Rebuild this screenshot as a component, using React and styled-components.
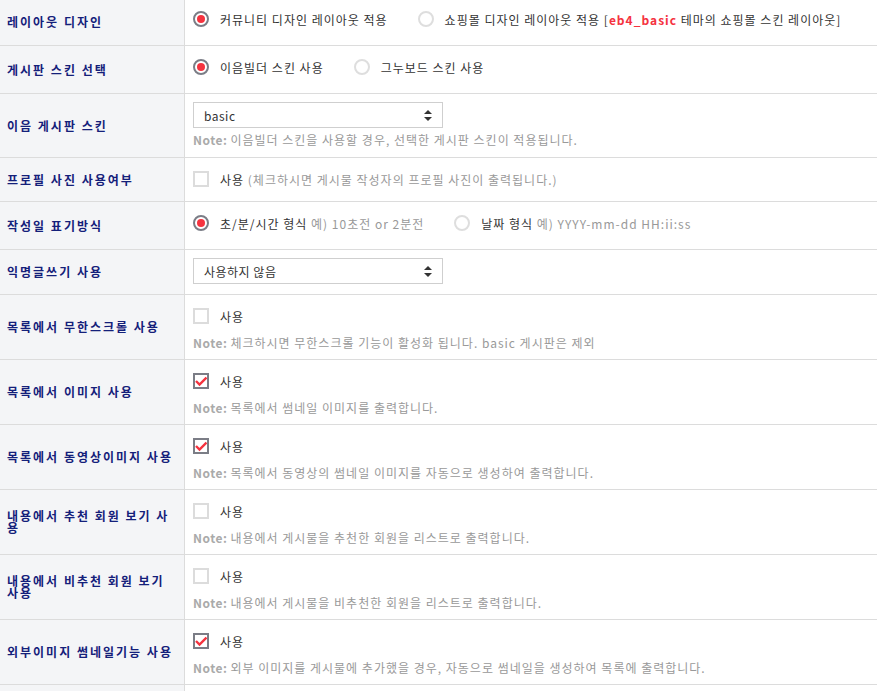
import React from 'react';
import styled, { createGlobalStyle } from 'styled-components';

const Global = createGlobalStyle`
  html, body { margin: 0; padding: 0; overflow: hidden; background: #fff; }
  body { font-family: "Noto Sans CJK KR", "Noto Sans", sans-serif; }
`;

const Table = styled.div`
  margin-top: -2px;
  width: 100%;
`;

const Row = styled.div`
  display: grid;
  grid-template-columns: 185px 1fr;
  border-bottom: 1px solid #dcdcdc;
`;

const Label = styled.div`
  background: #f4f5f7;
  border-right: 1px solid #dcdcdc;
  padding: 0 10px 0 7px;
  display: flex;
  align-items: center;
  font-size: 12px;
  font-weight: 700;
  letter-spacing: 2px;
  line-height: 12px;
  color: #14207a;
`;

const Cell = styled.div`
  padding: ${p => p.$pad || '10px 8px 15px'};
  display: flex;
  flex-direction: column;
  align-items: flex-start;
  min-width: 0;
`;

const Line = styled.div`
  display: flex;
  align-items: center;
  height: 22px;
`;

const Option = styled.label`
  display: inline-flex;
  align-items: center;
  gap: 11px;
  margin-right: ${p => (p.$last ? 0 : '30px')};
  font-size: 12px;
  letter-spacing: 1px;
  color: #333;
  white-space: nowrap;
`;

const RadioDot = styled.span`
  width: 16px;
  height: 16px;
  box-sizing: border-box;
  border-radius: 50%;
  border: 2px solid ${p => (p.$on ? '#7b7d86' : '#dedede')};
  display: inline-flex;
  align-items: center;
  justify-content: center;
  flex: none;
  &::after {
    content: '';
    width: 8px;
    height: 8px;
    border-radius: 50%;
    background: ${p => (p.$on ? '#f5333f' : 'transparent')};
  }
`;

const Box = styled.span`
  width: 16px;
  height: 16px;
  box-sizing: border-box;
  border: 2px solid ${p => (p.$on ? '#7b7d86' : '#dcdcdc')};
  display: inline-flex;
  align-items: center;
  justify-content: center;
  flex: none;
`;

const Hint = styled.span`
  color: #999;
`;

const Accent = styled.b`
  color: #f5333f;
  font-weight: 700;
`;

const Note = styled.div`
  margin-top: ${p => p.$mt || '8px'};
  font-size: 12px;
  letter-spacing: 1px;
  line-height: 16px;
  color: #999;
  white-space: nowrap;
`;

const NoteTag = styled.b`
  color: #aaa;
  font-weight: 700;
  letter-spacing: 0.5px;
  margin-right: 3px;
`;

const SelectBox = styled.div`
  width: 250px;
  height: 26px;
  box-sizing: border-box;
  border: 1px solid #cfcfcf;
  background: #fff;
  display: flex;
  align-items: center;
  justify-content: space-between;
  padding: 0 10px 0 10px;
  font-size: 12px;
  letter-spacing: 0.5px;
  color: #333;
`;

const Radio = ({ on, children, last }) => (
  <Option $last={last}>
    <RadioDot $on={on} />
    <span>{children}</span>
  </Option>
);

const Check = ({ on, children }) => (
  <Option $last>
    <Box $on={on}>
      {on && (
        <svg width="12" height="12" viewBox="0 0 12 12">
          <polyline points="1,6 4.5,9.5 11.5,2.5" fill="none" stroke="#f5333f" strokeWidth="2.4" />
        </svg>
      )}
    </Box>
    <span>{children}</span>
  </Option>
);

const Select = ({ value }) => (
  <SelectBox>
    <span>{value}</span>
    <svg width="8" height="11" viewBox="0 0 8 11">
      <polygon points="4,0 8,4 0,4" fill="#333" />
      <polygon points="0,7 8,7 4,11" fill="#333" />
    </svg>
  </SelectBox>
);

const CheckWithNote = ({ label, on, note }) => (
  <Row>
    <Label>{label}</Label>
    <Cell $pad="10px 8px 8px">
      <Line>
        <Check on={on}>사용</Check>
      </Line>
      <Note>
        <NoteTag>Note:</NoteTag>
        {note}
      </Note>
    </Cell>
  </Row>
);

export default function App() {
  return (
    <>
      <Global />
      <Table>
        <Row>
          <Label>레이아웃 디자인</Label>
          <Cell>
            <Line>
              <Radio on>커뮤니티 디자인 레이아웃 적용</Radio>
              <Radio last>
                쇼핑몰 디자인 레이아웃 적용 [<Accent>eb4_basic</Accent> 테마의 쇼핑몰 스킨 레이아웃]
              </Radio>
            </Line>
          </Cell>
        </Row>
        <Row>
          <Label>게시판 스킨 선택</Label>
          <Cell>
            <Line>
              <Radio on>이음빌더 스킨 사용</Radio>
              <Radio last>그누보드 스킨 사용</Radio>
            </Line>
          </Cell>
        </Row>
        <Row>
          <Label>이음 게시판 스킨</Label>
          <Cell $pad="8px 8px 9px">
            <Select value="basic" />
            <Note $mt="4px">
              <NoteTag>Note:</NoteTag>
              이음빌더 스킨을 사용할 경우, 선택한 게시판 스킨이 적용됩니다.
            </Note>
          </Cell>
        </Row>
        <Row>
          <Label>프로필 사진 사용여부</Label>
          <Cell $pad="10px 8px 11px">
            <Line>
              <Check>
                사용 <Hint>(체크하시면 게시물 작성자의 프로필 사진이 출력됩니다.)</Hint>
              </Check>
            </Line>
          </Cell>
        </Row>
        <Row>
          <Label>작성일 표기방식</Label>
          <Cell>
            <Line>
              <Radio on>
                초/분/시간 형식 <Hint>예) 10초전 or 2분전</Hint>
              </Radio>
              <Radio last>
                날짜 형식 <Hint>예) YYYY-mm-dd HH:ii:ss</Hint>
              </Radio>
            </Line>
          </Cell>
        </Row>
        <Row>
          <Label>익명글쓰기 사용</Label>
          <Cell $pad="8px 8px 10px">
            <Select value="사용하지 않음" />
          </Cell>
        </Row>
        <CheckWithNote
          label="목록에서 무한스크롤 사용"
          note="체크하시면 무한스크롤 기능이 활성화 됩니다. basic 게시판은 제외"
        />
        <CheckWithNote label="목록에서 이미지 사용" on note="목록에서 썸네일 이미지를 출력합니다." />
        <CheckWithNote
          label="목록에서 동영상이미지 사용"
          on
          note="목록에서 동영상의 썸네일 이미지를 자동으로 생성하여 출력합니다."
        />
        <CheckWithNote
          label="내용에서 추천 회원 보기 사용"
          note="내용에서 게시물을 추천한 회원을 리스트로 출력합니다."
        />
        <CheckWithNote
          label="내용에서 비추천 회원 보기 사용"
          note="내용에서 게시물을 비추천한 회원을 리스트로 출력합니다."
        />
        <CheckWithNote
          label="외부이미지 썸네일기능 사용"
          on
          note="외부 이미지를 게시물에 추가했을 경우, 자동으로 썸네일을 생성하여 목록에 출력합니다."
        />
        <Row>
          <Label />
          <Cell>
            <Line />
          </Cell>
        </Row>
      </Table>
    </>
  );
}
